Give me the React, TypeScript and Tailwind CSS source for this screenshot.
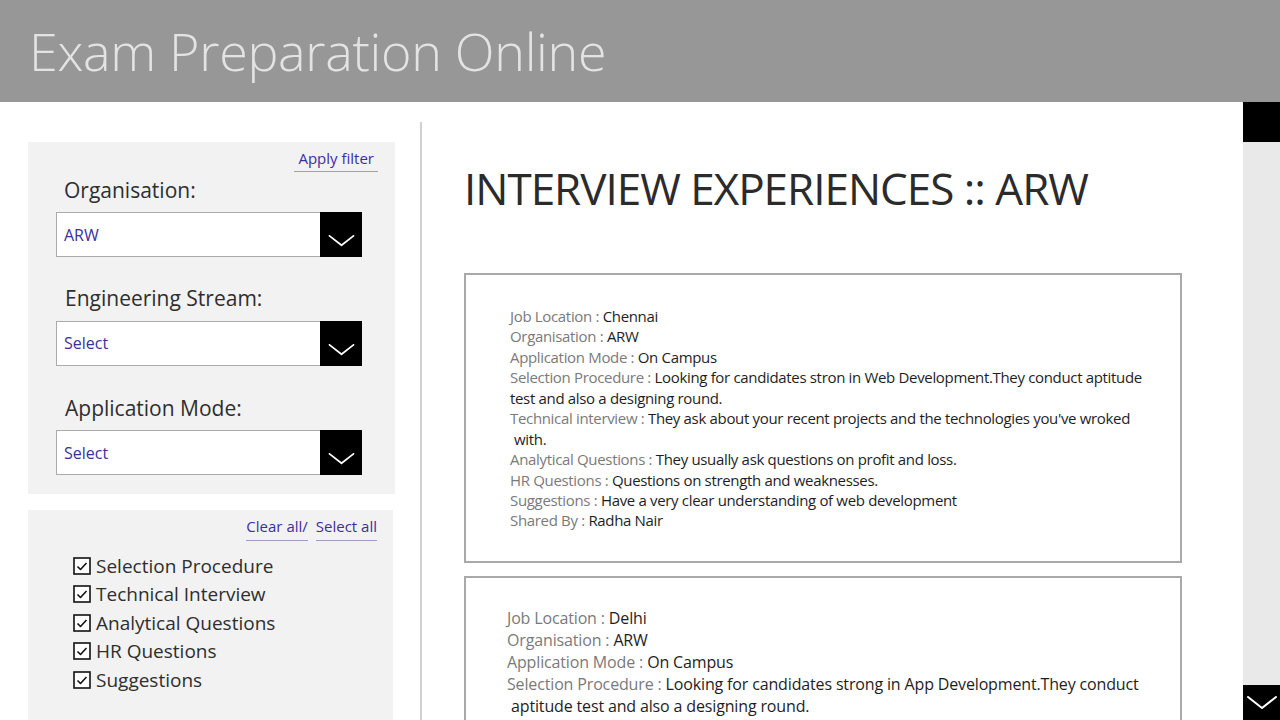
import React from "react";

const Chevron = ({ w = 30, h = 14 }: { w?: number; h?: number }) => (
  <svg width={w} height={h} viewBox="0 0 30 14" fill="none">
    <polyline points="1,1 15,12 29,1" stroke="white" strokeWidth="2" strokeLinecap="round" strokeLinejoin="round" />
  </svg>
);

const SelectBox = ({ value }: { value: string }) => (
  <div className="flex h-[45px] w-[306px] border border-[#ababab] bg-white">
    <div className="flex flex-1 items-center pl-[7px] text-[16px] text-[#3b2f9e]">{value}</div>
    <div className="flex w-[42px] items-end justify-center bg-black pb-[10px] -my-px -mr-px">
      <Chevron w={29} h={12} />
    </div>
  </div>
);

const Check = () => (
  <svg width="18" height="18" viewBox="0 0 18 18" fill="none">
    <rect x="1" y="1" width="16" height="16" stroke="#111" strokeWidth="1.6" fill="white" />
    <polyline points="4.5,9.5 7.5,12.5 13.5,6" stroke="#111" strokeWidth="1.6" fill="none" strokeLinejoin="round" />
  </svg>
);

type Line = { label?: string; value: string; indent?: boolean };

const Card = ({ lines, top, gap, pl, h, text }: { lines: Line[]; top: number; gap: string; pl: string; h: string; text: string }) => (
  <div className={`border-2 border-[#a9a9a9] bg-white w-[718px] ${h} ${pl}`} style={{ paddingTop: top }}>
    <div className={`flex flex-col ${gap}`}>
      {lines.map((l, i) => (
        <div key={i} className={`${text} whitespace-nowrap ${l.indent ? "pl-[4px]" : ""}`}>
          {l.label && <span className="text-[#7a7a7a]">{l.label} : </span>}
          <span className="text-[#1e1e1e]">{l.value}</span>
        </div>
      ))}
    </div>
  </div>
);

const card1: Line[] = [
  { label: "Job Location", value: "Chennai" },
  { label: "Organisation", value: "ARW" },
  { label: "Application Mode", value: "On Campus" },
  { label: "Selection Procedure", value: "Looking for candidates stron in Web Development.They conduct aptitude" },
  { value: "test and also a designing round." },
  { label: "Technical interview", value: "They ask about your recent projects and the technologies you've wroked" },
  { value: "with.", indent: true },
  { label: "Analytical Questions", value: "They usually ask questions on profit and loss." },
  { label: "HR Questions", value: "Questions on strength and weaknesses." },
  { label: "Suggestions", value: "Have a very clear understanding of web development" },
  { label: "Shared By", value: "Radha Nair" },
];

const card2: Line[] = [
  { label: "Job Location", value: "Delhi" },
  { label: "Organisation", value: "ARW" },
  { label: "Application Mode", value: "On Campus" },
  { label: "Selection Procedure", value: "Looking for candidates strong in App Development.They conduct" },
  { value: "aptitude test and also a  designing round.", indent: true },
];

export default function App() {
  return (
    <div className="flex h-[720px] w-[1280px] flex-col overflow-hidden bg-white font-['Open_Sans',sans-serif]">
      <header className="flex h-[102px] shrink-0 items-center bg-[#979797] pl-[29px]">
        <h1 className="text-[52px] font-light leading-none tracking-[-0.3px] text-[#e3e3e3]">Exam Preparation Online</h1>
      </header>
      <div className="flex min-h-0 flex-1">
        <aside className="flex w-[420px] shrink-0 flex-col gap-[16px] pl-[28px] pt-[40px]">
          <div className="flex h-[352px] w-[367px] flex-col bg-[#f2f2f2] pl-[28px] pr-[17px] pt-[5px]">
            <div className="flex justify-end">
              <span className="border-b border-[#a09cc9] px-[4px] pb-[1px] text-[15px] text-[#3b2f9e]">Apply filter</span>
            </div>
            <div className="mt-[3px] pl-[8px] text-[21px] text-[#2e2e2e]">Organisation:</div>
            <div className="mt-[6px]"><SelectBox value="ARW" /></div>
            <div className="mt-[26px] pl-[9px] text-[21px] text-[#2e2e2e]">Engineering Stream:</div>
            <div className="mt-[6px]"><SelectBox value="Select" /></div>
            <div className="mt-[27px] pl-[9px] text-[21px] text-[#2e2e2e]">Application Mode:</div>
            <div className="mt-[6px]"><SelectBox value="Select" /></div>
          </div>
          <div className="flex w-[365px] flex-1 flex-col bg-[#f2f2f2] pl-[45px] pr-[16px] pt-[5px]">
            <div className="flex justify-end gap-[8px] text-[15px] text-[#3b2f9e]">
              <span className="border-b border-[#a09cc9] pb-[2px]">Clear all/</span>
              <span className="border-b border-[#a09cc9] pb-[2px]">Select all</span>
            </div>
            <div className="mt-[13px] flex flex-col gap-[4px]">
              {["Selection Procedure", "Technical Interview", "Analytical Questions", "HR Questions", "Suggestions"].map((t) => (
                <div key={t} className="flex h-[24.5px] items-center gap-[5px] text-[19px] text-[#2e2e2e]">
                  <Check />
                  <span>{t}</span>
                </div>
              ))}
            </div>
          </div>
        </aside>
        <div className="mt-[20px] w-[2px] shrink-0 bg-[#d0d0d0]" />
        <main className="flex min-w-0 flex-1 flex-col pl-[42px] pt-[64px]">
          <h2 className="text-[44px] leading-none tracking-[-1px] text-[#2b2b2b]">INTERVIEW EXPERIENCES :: ARW</h2>
          <div className="mt-[63px] flex flex-col gap-[13px]">
            <Card lines={card1} top={32} gap="gap-[2.45px]" pl="pl-[44px]" h="h-[290px]" text="text-[15px] leading-[18px] tracking-[-0.33px]" />
            <Card lines={card2} top={31} gap="gap-[3px]" pl="pl-[41px]" h="h-[200px]" text="text-[16px] leading-[19px] tracking-[-0.15px]" />
          </div>
        </main>
        <div className="flex w-[37px] shrink-0 flex-col justify-between bg-[#e9e9e9]">
          <div className="h-[40px] bg-black" />
          <div className="flex h-[35px] items-center justify-center bg-black">
            <Chevron w={30} h={14} />
          </div>
        </div>
      </div>
    </div>
  );
}
